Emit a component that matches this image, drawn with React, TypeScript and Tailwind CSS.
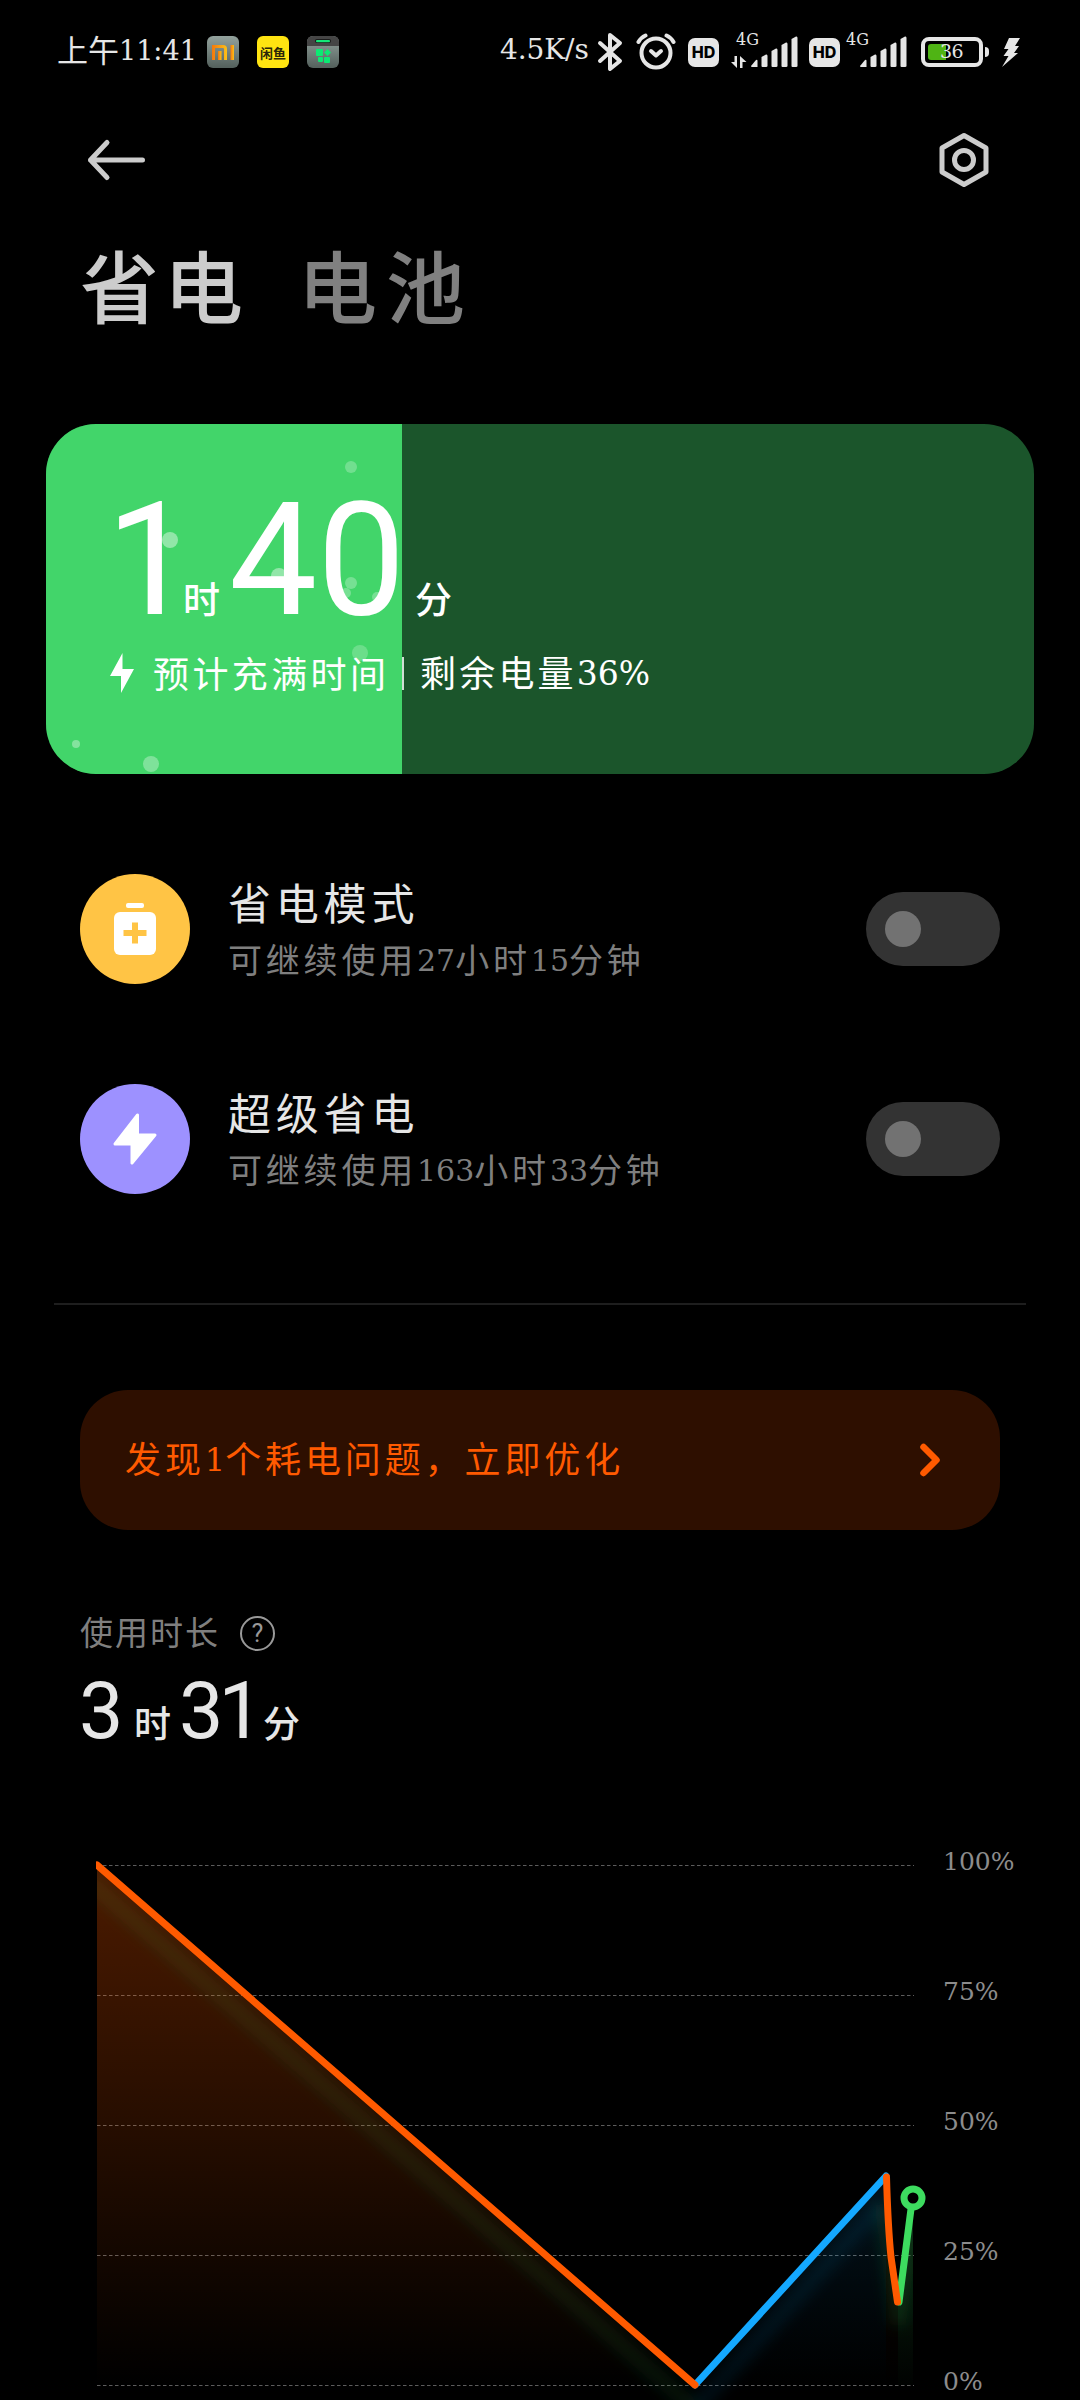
import { ChevronRight } from "lucide-react";
import type { ReactNode } from "react";

interface ModeRowProps {
  icon: ReactNode;
  iconClass: string;
  title: string;
  detail: string;
}

const gridLines = [
  { label: "100%", y: 25.5 },
  { label: "75%", y: 155.5 },
  { label: "50%", y: 285.5 },
  { label: "25%", y: 415.5 },
  { label: "0%", y: 545.5 },
];

const bubbles = [
  { x: 305, y: 43, r: 6, o: 0.25 },
  { x: 124, y: 116, r: 8, o: 0.42 },
  { x: 233, y: 152, r: 8, o: 0.42 },
  { x: 305, y: 159, r: 6, o: 0.28 },
  { x: 300, y: 169, r: 5, o: 0.28 },
  { x: 331, y: 173, r: 5, o: 0.28 },
  { x: 314, y: 229, r: 8, o: 0.22 },
  { x: 30, y: 320, r: 4, o: 0.35 },
  { x: 105, y: 340, r: 8, o: 0.32 },
];

// Latin runs are set in the slab face, a bit smaller than the Chinese around them
function Mixed({ text, numClass }: { text: string; numClass: string }) {
  return (
    <>
      {text.split(/([0-9:%]+)/).map((part, i) =>
        i % 2 === 1 ? (
          <span
            key={i}
            className={`font-['DejaVu_Serif',serif] leading-none tracking-normal ${numClass}`}
          >
            {part}
          </span>
        ) : (
          part
        ),
      )}
    </>
  );
}

function HdBadge() {
  return (
    <div className="flex h-[29px] w-[31px] shrink-0 items-center justify-center rounded-[7px] bg-[#e6e6e6] font-[Inter,sans-serif] text-[16px] leading-none font-extrabold text-black">
      HD
    </div>
  );
}

function SignalBars() {
  return (
    <svg width="48" height="32" viewBox="0 0 48 32" fill="#e6e6e6">
      <path d="M1 30 L6 24 Q7.500 23 7.500 25 V31 H1.500 Z" />
      <path d="M11.500 21 L16 18.500 Q17.500 18 17.500 20 V30 Q17.500 31 16 31 H12.500 Q11.500 31 11.500 30 Z" />
      <path d="M21.500 15 L26 12.500 Q27.500 12 27.500 14 V30 Q27.500 31 26 31 H22.500 Q21.500 31 21.500 30 Z" />
      <path d="M31.500 9 L36 6.500 Q37.500 6 37.500 8 V30 Q37.500 31 36 31 H32.500 Q31.500 31 31.500 30 Z" />
      <path d="M41.500 3 L46 0.500 Q47.500 0 47.500 2 V30 Q47.500 31 46 31 H42.500 Q41.500 31 41.500 30 Z" />
    </svg>
  );
}

function StatusBar() {
  return (
    <div className="flex h-[104px] shrink-0 items-center pl-[57px] text-[#e6e6e6]">
      <div className="flex w-[150px] items-center pb-[8px] text-[31px] leading-none whitespace-nowrap">
        <span>
          <Mixed text="上午11:41" numClass="text-[27px] align-[2px]" />
        </span>
      </div>

      {/* Notification icons */}
      <div className="flex w-[293px] gap-[18px]">
        <svg width="32" height="32" viewBox="0 0 32 32">
          <defs>
            <linearGradient id="tile" x1="0" y1="0" x2="0" y2="1">
              <stop offset="0" stopColor="#93a29d" />
              <stop offset="1" stopColor="#53605c" />
            </linearGradient>
            <linearGradient id="mi" x1="0" y1="0" x2="1" y2="0">
              <stop offset="0" stopColor="#f5780c" />
              <stop offset="1" stopColor="#fcc018" />
            </linearGradient>
          </defs>
          <rect width="32" height="32" rx="6" fill="url(#tile)" />
          <g fill="url(#mi)">
            <path d="M5 9 H16 Q20 9 20 13 V24 H17 V13 Q17 12 16 12 H8 V24 H5 Z" />
            <rect x="11" y="15" width="3.500" height="9" />
            <rect x="23.500" y="9" width="3.500" height="15" />
          </g>
        </svg>
        <div className="flex h-8 w-8 items-center justify-center rounded-[6px] bg-[#ffe411] text-[13px] leading-none font-bold text-[#2b2708]">
          闲鱼
        </div>
        <svg width="32" height="32" viewBox="0 0 32 32">
          <rect width="32" height="32" rx="6" fill="url(#tile)" />
          <path d="M0 10 V6 Q0 0 6 0 H26 Q32 0 32 6 V10 Z" fill="#454545" />
          <rect x="8" y="3" width="16" height="4" rx="2" fill="#1c1c1c" />
          <rect x="9" y="4" width="14" height="2.200" rx="1" fill="#14e878" />
          <g fill="#0bea73">
            <rect x="9" y="13" width="7" height="7" rx="1" />
            <rect x="11" y="21" width="5" height="5" rx="1" />
            <rect x="17" y="21" width="6" height="6" rx="1" />
            <path d="M20.500 13 L24 16.500 L20.500 20 L17 16.500 Z" />
          </g>
        </svg>
      </div>

      <span className="w-[97px] pb-[5px] font-['DejaVu_Serif',serif] text-[28px] leading-none tracking-[-0.1px]">
        4.5K/s
      </span>
      <svg
        width="26"
        height="40"
        viewBox="0 0 26 40"
        fill="none"
        stroke="#e6e6e6"
        strokeWidth="4"
        strokeLinecap="round"
        strokeLinejoin="round"
      >
        <path d="M3 11 L23 29 L13 37 V3 L23 11 L3 29" />
      </svg>
      <svg
        className="ml-[13px]"
        width="40"
        height="40"
        viewBox="0 0 40 40"
        fill="none"
        stroke="#e6e6e6"
        strokeWidth="4"
        strokeLinecap="round"
        strokeLinejoin="round"
      >
        <circle cx="20" cy="21" r="14.500" />
        <path d="M15 19 L20 23.500 L25 19" />
        <path d="M2.500 10 Q5 5.500 9.500 3.500" />
        <path d="M37.500 10 Q35 5.500 30.500 3.500" />
      </svg>
      <div className="ml-[12px] flex items-center">
        <HdBadge />
        <div className="relative ml-[12px] flex h-8 w-[67px] items-end justify-end">
          <span className="absolute -top-[4px] left-[5px] font-['DejaVu_Serif',serif] text-[16px] leading-none">
            4G
          </span>
          <svg
            className="absolute bottom-0 left-0"
            width="16"
            height="12"
            viewBox="0 0 16 12"
            fill="#e6e6e6"
          >
            <path d="M3.500 0 H6 V12 L0 6 H3.500 Z" />
            <path d="M9 0 L15.500 6 H11.500 V12 H9 Z" />
          </svg>
          <SignalBars />
        </div>
        <div className="ml-[11px]">
          <HdBadge />
        </div>
        <div className="relative ml-[6px] flex h-8 w-[61px] items-end justify-end">
          <span className="absolute -top-[4px] left-0 font-['DejaVu_Serif',serif] text-[16px] leading-none">
            4G
          </span>
          <SignalBars />
        </div>
      </div>

      {/* Battery */}
      <div className="relative ml-[14px] h-[30px] w-[62px] rounded-[8px] border-4 border-[#e6e6e6]">
        <div className="absolute top-[3px] left-[3px] h-4 w-[18px] rounded-l-[3px] bg-[#4fb414]" />
        <span className="absolute top-[1px] left-[15px] font-['DejaVu_Serif',serif] text-[19px] leading-none tracking-[-0.5px]">
          36
        </span>
      </div>
      <div className="ml-[2px] h-[10px] w-1 rounded-r-full bg-[#e6e6e6]" />
      <svg
        className="ml-[12px]"
        width="20"
        height="30"
        viewBox="0 0 20 30"
        fill="#e6e6e6"
      >
        <path d="M8 1 H19 L14 9 H18 L13 16 H17 L1 30 L7.500 19 H2.500 L7.500 12 H3 Z" />
      </svg>
    </div>
  );
}

function ChargeCard() {
  return (
    <div className="relative mx-[46px] mt-[74px] h-[350px] shrink-0 overflow-hidden rounded-[50px] bg-[#1b552b] text-white">
      <div className="absolute inset-y-0 left-0 w-[356px] bg-[#42d56a]" />
      <svg className="absolute inset-0" width="356" height="350">
        {bubbles.map((b) => (
          <circle
            key={`${b.x}-${b.y}`}
            cx={b.x}
            cy={b.y}
            r={b.r}
            fill="#fff"
            opacity={b.o}
          />
        ))}
      </svg>
      <div className="relative flex h-[200px] items-baseline pt-[58px] pl-[60px] leading-none">
        <span className="w-[77px] font-[Roboto,sans-serif] text-[157px] leading-none tracking-[-13px]">
          1
        </span>
        <span className="w-[46px] text-[37px] font-medium">时</span>
        <span className="w-[186px] font-[Roboto,sans-serif] text-[157px] leading-none">
          40
        </span>
        <span className="text-[37px] font-medium">分</span>
      </div>
      <div className="relative mt-[26px] flex h-[46px] items-center pl-[64px] text-[36px] leading-none">
        <svg width="24" height="40" viewBox="0 0 24 40" fill="#fff">
          <path d="M12.500 0 V16 H24 L11 40 V23 H0 Z" />
        </svg>
        <span className="ml-[19px] w-[249px] pb-[3px] tracking-[3.4px] whitespace-nowrap">
          预计充满时间
        </span>
        <div className="h-[33px] w-[2px] bg-white/80" />
        <span className="ml-[16px] pb-[3px] tracking-[3.2px]">
          <Mixed text="剩余电量36%" numClass="text-[33px] align-[2px]" />
        </span>
      </div>
    </div>
  );
}

function ModeRow({ icon, iconClass, title, detail }: ModeRowProps) {
  return (
    <div className="flex h-[110px] items-center">
      <div
        className={`flex h-[110px] w-[110px] items-center justify-center rounded-full ${iconClass}`}
      >
        {icon}
      </div>
      <div className="ml-[38px] flex-1 pb-[3px]">
        <div className="text-[43px] leading-[54px] tracking-[4.8px] text-[#e6e6e6]">
          {title}
        </div>
        <div className="mt-[9px] text-[34px] leading-[44px] tracking-[3.8px] text-[#7f7f7f]">
          <Mixed text={detail} numClass="text-[30px] align-[2px]" />
        </div>
      </div>
      <div className="flex h-[74px] w-[134px] items-center rounded-full bg-[#333333] pl-[19px]">
        <div className="h-9 w-9 rounded-full bg-[#727272]" />
      </div>
    </div>
  );
}

function UsageChart() {
  return (
    <svg
      className="mt-[80px] block shrink-0"
      width="1080"
      height="560"
      viewBox="0 0 1080 560"
      fill="none"
    >
      <defs>
        <linearGradient id="orangeFill" x1="0" y1="25" x2="0" y2="545" gradientUnits="userSpaceOnUse">
          <stop offset="0" stopColor="#ff5a00" stopOpacity="0.3" />
          <stop offset="1" stopColor="#ff5a00" stopOpacity="0" />
        </linearGradient>
        <linearGradient id="blueFill" x1="0" y1="336" x2="0" y2="545" gradientUnits="userSpaceOnUse">
          <stop offset="0" stopColor="#14a8ff" stopOpacity="0.11" />
          <stop offset="1" stopColor="#14a8ff" stopOpacity="0" />
        </linearGradient>
        <linearGradient id="greenFill" x1="0" y1="358" x2="0" y2="545" gradientUnits="userSpaceOnUse">
          <stop offset="0" stopColor="#3ddc5f" stopOpacity="0.18" />
          <stop offset="1" stopColor="#3ddc5f" stopOpacity="0.01" />
        </linearGradient>
        <filter id="glow" x="-10%" y="-10%" width="120%" height="120%">
          <feGaussianBlur stdDeviation="7" />
        </filter>
        <clipPath id="plot">
          <path d="M97 25 L695 545 L886 336 L891 415 L898 463 L913 368 V560 H97 Z" />
        </clipPath>
      </defs>

      {gridLines.map((g) => (
        <line
          key={g.label}
          x1="97"
          y1={g.y}
          x2="914"
          y2={g.y}
          stroke="#5c5c5c"
          strokeDasharray="3.500 2.500"
        />
      ))}

      <path d="M97 25 L695 545 H97 Z" fill="url(#orangeFill)" />
      <path d="M695 545 L886 336 V545 Z" fill="url(#blueFill)" />
      <path d="M886 336 L891 415 L898 463 V545 H886 Z" fill="url(#orangeFill)" opacity="0.5" />
      <path d="M898 463 L913 358 V545 H898 Z" fill="url(#greenFill)" />

      {/* Soft band under the curve */}
      <g clipPath="url(#plot)">
        <g filter="url(#glow)" strokeWidth="15">
          <path d="M87 40 L695 569" stroke="#3ddc5f" strokeOpacity="0.09" />
          <path d="M695 569 L882 364" stroke="#14a8ff" strokeOpacity="0.09" />
          <path d="M882 364 L898 484 L912 384" stroke="#3ddc5f" strokeOpacity="0.12" />
        </g>
      </g>

      <g strokeWidth="7" strokeLinecap="round" strokeLinejoin="round">
        <path d="M899 462 L911 369" stroke="#3ddc5f" />
        <path d="M695 545 L886 336" stroke="#14a8ff" />
        <path d="M97 25 L695 545" stroke="#ff5a00" />
        <path d="M886.500 337 Q888 388 891 417 L897.500 462" stroke="#ff5a00" />
      </g>
      <rect x="88" y="12" width="8" height="26" fill="#000" />
      <circle cx="913" cy="358" r="9" fill="#000" stroke="#3ddc5f" strokeWidth="7" />

      {gridLines.map((g) => (
        <text
          key={g.label}
          x="943"
          y={g.y + 4.5}
          fill="#8c8c8c"
          className="font-['DejaVu_Serif',serif] text-[25px]"
        >
          {g.label}
        </text>
      ))}
    </svg>
  );
}

export default function App() {
  return (
    <div className="flex h-[2400px] w-[1080px] flex-col overflow-hidden bg-black font-['Noto_Sans_CJK_SC',sans-serif]">
      <StatusBar />

      {/* Top bar */}
      <div className="flex h-[112px] shrink-0 items-center justify-between pr-[90px] pl-[86px]">
        <svg
          width="60"
          height="44"
          viewBox="0 0 60 44"
          fill="none"
          stroke="#cccccc"
          strokeWidth="5"
          strokeLinecap="round"
          strokeLinejoin="round"
        >
          <path d="M21 4.500 L4.500 22 L21 39.500 M4.500 22 H56.500" />
        </svg>
        <svg
          width="52"
          height="56"
          viewBox="0 0 52 56"
          fill="none"
          stroke="#cccccc"
          strokeWidth="5"
          strokeLinejoin="round"
        >
          <path d="M26 3.500 L48 16 V40 L26 52.500 L4 40 V16 Z" />
          <circle cx="26" cy="28" r="9.500" />
        </svg>
      </div>

      {/* Tabs */}
      <div className="flex h-[134px] shrink-0 items-center gap-[50px] pl-[80px] text-[79px] leading-none font-medium">
        <span className="tracking-[5px] text-[#cccccc]">省电</span>
        <span className="tracking-[9px] text-[#808080]">电池</span>
      </div>

      <ChargeCard />

      <div className="mt-[100px] flex shrink-0 flex-col gap-[100px] px-[80px]">
        <ModeRow
          title="省电模式"
          detail="可继续使用27小时15分钟"
          iconClass="bg-[#ffc445]"
          icon={
            <svg width="42" height="54" viewBox="0 0 42 54">
              <rect x="12" y="1" width="18" height="5" rx="2" fill="#fff" />
              <rect y="10" width="42" height="43" rx="6" fill="#fff" />
              <path
                d="M21 20.500 V41.500 M9.500 31 H32.500"
                stroke="#ffc445"
                strokeWidth="6"
              />
            </svg>
          }
        />
        <ModeRow
          title="超级省电"
          detail="可继续使用163小时33分钟"
          iconClass="bg-[#9d91ff]"
          icon={
            <svg
              width="44"
              height="54"
              viewBox="0 0 44 54"
              fill="#fff"
              stroke="#fff"
              strokeWidth="3"
              strokeLinejoin="round"
            >
              <path d="M24.500 3 V23 H42 L19 51 V32 H2 Z" />
            </svg>
          }
        />
      </div>

      <div className="mx-[54px] mt-[109px] h-[2px] shrink-0 bg-[#1e1e1e]" />

      {/* Drain warning */}
      <div className="mx-[80px] mt-[85px] flex h-[140px] shrink-0 items-center justify-between rounded-[48px] bg-[#2e0f00] pr-[44px] pl-[45px] text-[#ff5a00]">
        <span className="pb-[6px] text-[36px] leading-none tracking-[3.9px]">
          <Mixed
            text="发现1个耗电问题，立即优化"
            numClass="text-[32px] align-[2px]"
          />
        </span>
        <ChevronRight size={52} strokeWidth={3} />
      </div>

      {/* Usage time */}
      <div className="mt-[82px] flex h-[42px] shrink-0 items-center pl-[80px] text-[#7f7f7f]">
        <span className="w-[160px] pb-[3px] text-[33px] leading-none tracking-[2px]">
          使用时长
        </span>
        <div className="flex h-[35px] w-[35px] items-center justify-center rounded-full border-2 border-[#999999] font-[Roboto,sans-serif] text-[25px] leading-none text-[#999999]">
          ?
        </div>
      </div>
      <div className="mt-[18px] flex h-[88px] shrink-0 items-baseline pl-[79px] leading-none text-[#e6e6e6]">
        <span className="w-[55px] font-[Roboto,sans-serif] text-[79px] leading-none">
          3
        </span>
        <span className="w-[45px] text-[37px] font-medium">时</span>
        <span className="w-[84px] font-[Roboto,sans-serif] text-[79px] leading-none tracking-[-5px]">
          31
        </span>
        <span className="text-[37px] font-medium">分</span>
      </div>

      <UsageChart />
    </div>
  );
}
